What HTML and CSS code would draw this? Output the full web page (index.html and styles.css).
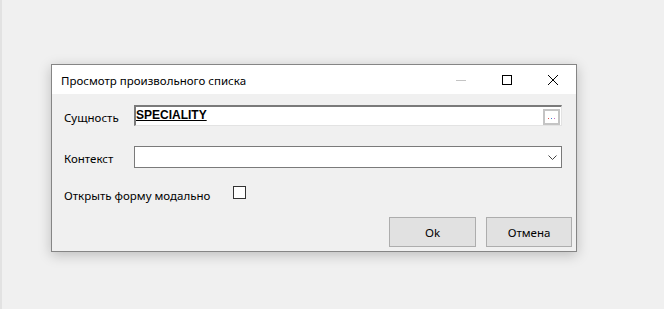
FILE: index.html
```html
<!DOCTYPE html>
<html lang="ru">
<head>
    <meta charset="UTF-8">
    <title>Просмотр произвольного списка</title>
    <link rel="stylesheet" href="styles.css">
</head>
<body>
    <div class="desktop">
        <div class="window">
            <div class="titlebar">
                <span class="title">Просмотр произвольного списка</span>
                <div class="caption-buttons">
                    <div class="caption-btn">
                        <svg width="10" height="10" viewBox="0 0 10 10"><line x1="0" y1="5.5" x2="10" y2="5.5" stroke="#c4c4c4" stroke-width="1"/></svg>
                    </div>
                    <div class="caption-btn">
                        <svg width="10" height="10" viewBox="0 0 10 10"><rect x="0.5" y="0.5" width="9" height="9" fill="none" stroke="#000" stroke-width="1"/></svg>
                    </div>
                    <div class="caption-btn">
                        <svg width="10" height="10" viewBox="0 0 10 10"><path d="M0 0 L10 10 M10 0 L0 10" stroke="#000" stroke-width="1"/></svg>
                    </div>
                </div>
            </div>
            <div class="client">
                <div class="row row-entity">
                    <label class="field-label">Сущность</label>
                    <div class="entity-box">
                        <span class="entity-value">SPECIALITY</span>
                        <div class="ellipsis-btn">
                            <svg width="7" height="1" viewBox="0 0 7 1"><rect x="0" y="0" width="1" height="1" fill="#d9534f"/><rect x="3" y="0" width="1" height="1" fill="#4a7fd4"/><rect x="6" y="0" width="1" height="1" fill="#d06cc0"/></svg>
                        </div>
                    </div>
                </div>
                <div class="row row-context">
                    <label class="field-label">Контекст</label>
                    <div class="combo">
                        <svg class="chevron" width="9" height="5" viewBox="0 0 9 5"><path d="M0.5 0.5 L4.5 4.5 L8.5 0.5" fill="none" stroke="#444" stroke-width="1"/></svg>
                    </div>
                </div>
                <div class="row row-modal">
                    <label class="check-label">Открыть форму модально</label>
                    <div class="checkbox"></div>
                </div>
                <div class="buttons">
                    <button class="btn btn-ok">Ok</button>
                    <button class="btn btn-cancel">Отмена</button>
                </div>
            </div>
        </div>
    </div>
</body>
</html>
```

FILE: styles.css
```css
html, body {
    margin: 0;
    padding: 0;
    height: 100%;
    overflow: hidden;
}
body {
    font-family: "Noto Sans", "Open Sans", sans-serif;
    font-size: 11.5px;
    color: #000;
    background-color: #f0f0f0;
}
.desktop {
    height: 309px;
    border-left: 2px solid #e2e2e2;
    box-sizing: border-box;
    padding-top: 64px;
    padding-left: 49px;
}
.window {
    width: 526px;
    box-sizing: border-box;
    border: 1px solid #858585;
    background-color: #f0f0f0;
    box-shadow: 0 3px 12px rgba(0, 0, 0, 0.22);
}
.titlebar {
    height: 29px;
    background-color: #fff;
    display: flex;
    align-items: center;
}
.title {
    flex: 1;
    padding-left: 9px;
    padding-top: 1px;
}
.caption-buttons {
    display: flex;
    height: 100%;
}
.caption-btn {
    width: 46px;
    height: 100%;
    display: flex;
    align-items: center;
    justify-content: center;
}
.caption-btn svg {
    display: block;
}
.client {
    padding: 11px 4px 4px 12px;
}
.row {
    display: flex;
    align-items: center;
}
.field-label {
    width: 70px;
    padding-top: 3px;
}
.row-entity {
    height: 21px;
}
.entity-box {
    width: 428px;
    height: 21px;
    box-sizing: border-box;
    background-color: #fff;
    border-top: 2px solid #7a7a7a;
    border-left: 2px solid #7a7a7a;
    border-right: 1px solid #e3e3e3;
    border-bottom: 1px solid #e3e3e3;
    display: flex;
    align-items: center;
    justify-content: space-between;
    padding-right: 1px;
}
.entity-value {
    font-family: "Liberation Sans", Arial, sans-serif;
    font-weight: bold;
    font-size: 12px;
    text-decoration: underline;
    line-height: 14px;
    margin-bottom: 2px;
}
.ellipsis-btn {
    width: 17px;
    height: 16px;
    box-sizing: border-box;
    border: 2px solid #c4c4c4;
    background-color: #fff;
    display: flex;
    align-items: flex-end;
    justify-content: center;
    padding-bottom: 4px;
    margin-top: 1px;
}
.ellipsis-btn svg {
    display: block;
}
.row-context {
    margin-top: 20px;
    height: 22px;
}
.combo {
    width: 428px;
    height: 22px;
    box-sizing: border-box;
    border: 1px solid #7a7a7a;
    background-color: #fff;
    display: flex;
    align-items: center;
    justify-content: flex-end;
    padding-right: 4px;
}
.chevron {
    display: block;
}
.row-modal {
    margin-top: 18px;
    height: 13px;
}
.check-label {
    width: 169px;
    padding-top: 5px;
}
.checkbox {
    width: 13px;
    height: 13px;
    box-sizing: border-box;
    border: 1px solid #333;
    background-color: #fff;
}
.buttons {
    display: flex;
    justify-content: flex-end;
    gap: 10px;
    margin-top: 18px;
}
.btn {
    font-family: "Noto Sans", "Open Sans", sans-serif;
    font-size: 11.5px;
    color: #000;
    width: 87px;
    height: 30px;
    background-color: #e1e1e1;
    border: 1px solid #adadad;
    padding: 0;
    margin: 0;
}
.btn-cancel {
    width: 86px;
}
```
